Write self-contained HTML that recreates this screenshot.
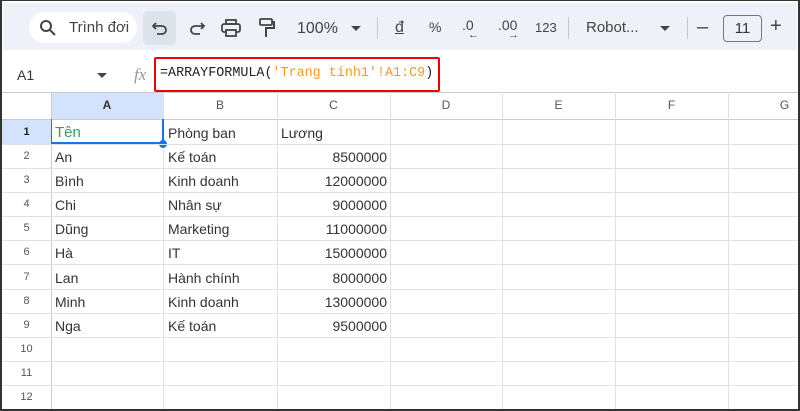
<!DOCTYPE html>
<html><head><meta charset="utf-8"><style>
*{box-sizing:border-box;margin:0;padding:0}
body{width:800px;height:411px;overflow:hidden;background:#fff;font-family:"Liberation Sans",Arial,sans-serif;position:relative}
.frame{position:absolute;left:0;top:0;width:800px;height:411px;border:2px solid #333;border-top-width:1px;z-index:10;pointer-events:none}
.tb{position:absolute;left:3px;top:3px;width:794px;height:47px;background:#eef2f8}
.t{position:absolute;color:#444;font-size:16px}
.hl{position:absolute;height:1px;background:#e1e1e1}
.vl{position:absolute;width:1px;background:#e1e1e1}
.c{position:absolute;font-size:14px;color:#333}
.rh{position:absolute;left:2px;width:49px;text-align:center;font-size:11px;color:#555}
.ch{position:absolute;top:98px;font-size:12px;color:#555;text-align:center}
</style></head><body>
<div class="tb"></div>
<div style="position:absolute;left:29px;top:12px;width:108px;height:31px;background:#fff;border-radius:16px"></div>
<svg style="position:absolute;left:39px;top:19px" width="18" height="18" viewBox="0 0 18 18"><circle cx="7" cy="7" r="5" fill="none" stroke="#444" stroke-width="2"/><path d="M11 11l5 5" stroke="#444" stroke-width="2"/></svg>
<div class="t" style="left:69px;top:19px;font-size:15px">Trình đơi</div>
<div style="position:absolute;left:143px;top:11px;width:33px;height:34px;background:#dde3ea;border-radius:4px"></div>
<svg style="position:absolute;left:151px;top:20px" width="18" height="16" viewBox="0 0 18 16"><path d="M5 3L2 6l3 3M2 6h9a4 4 0 010 8H6" fill="none" stroke="#444" stroke-width="1.8"/></svg>
<svg style="position:absolute;left:188px;top:20px" width="18" height="16" viewBox="0 0 18 16"><path d="M13 3l3 3-3 3M16 6H7a4 4 0 000 8h5" fill="none" stroke="#444" stroke-width="1.8"/></svg>
<svg style="position:absolute;left:221px;top:19px" width="20" height="18" viewBox="0 0 20 18"><rect x="5" y="1" width="10" height="4" fill="none" stroke="#444" stroke-width="1.8"/><rect x="1" y="5" width="18" height="8" rx="2" fill="none" stroke="#444" stroke-width="1.8"/><rect x="5" y="11" width="10" height="6" fill="#eef2f8" stroke="#444" stroke-width="1.8"/></svg>
<svg style="position:absolute;left:258px;top:18px" width="18" height="20" viewBox="0 0 18 20"><rect x="2" y="1" width="12" height="6" rx="1" fill="none" stroke="#444" stroke-width="1.8"/><path d="M14 4h2v6H8v3M8 13v6" fill="none" stroke="#444" stroke-width="2"/></svg>
<div class="t" style="left:297px;top:20px">100%</div>
<div style="position:absolute;left:351px;top:26px;border:5px solid transparent;border-top:5px solid #444"></div>
<div style="position:absolute;left:377px;top:17px;width:1px;height:22px;background:#c4c7c5"></div>
<div class="t" style="left:395px;top:19px;text-decoration:underline">đ</div>
<div class="t" style="left:429px;top:19px;font-size:14px">%</div>
<div class="t" style="left:462px;top:17px;font-size:14px">.0</div>
<div class="t" style="left:468px;top:29px;font-size:11px">←</div>
<div class="t" style="left:498px;top:17px;font-size:14px">.00</div>
<div class="t" style="left:508px;top:29px;font-size:11px">→</div>
<div class="t" style="left:535px;top:20px;font-size:13px">123</div>
<div style="position:absolute;left:568px;top:17px;width:1px;height:22px;background:#c4c7c5"></div>
<div class="t" style="left:586px;top:19px;font-size:15px">Robot...</div>
<div style="position:absolute;left:660px;top:26px;border:5px solid transparent;border-top:5px solid #444"></div>
<div style="position:absolute;left:687px;top:17px;width:1px;height:22px;background:#c4c7c5"></div>
<div class="t" style="left:697px;top:16px;font-size:20px">–</div>
<div style="position:absolute;left:723px;top:15px;width:39px;height:27px;border:1px solid #777;border-radius:4px;text-align:center;font-size:15px;color:#333;line-height:25px">11</div>
<div class="t" style="left:770px;top:15px;font-size:20px">+</div>
<div class="c" style="left:17px;top:67px;font-size:14px">A1</div>
<div style="position:absolute;left:97px;top:73px;border:5px solid transparent;border-top:5px solid #444"></div>
<div class="c" style="left:134px;top:65px;font-family:'Liberation Serif',serif;font-style:italic;color:#999;font-size:17px">fx</div>
<div style="position:absolute;left:154px;top:57px;width:286px;height:35px;border:2px solid #e00;border-radius:2px"></div>
<div class="c" style="left:160px;top:66px;font-family:'Liberation Mono',monospace;font-size:13.4px;color:#222">=ARRAYFORMULA(<span style="color:#f09a2c">'Trang tính1'!A1:C9</span>)</div>
<div class="hl" style="left:2px;top:92px;width:796px;background:#ccc"></div>
<div style="position:absolute;left:51px;top:93px;width:112px;height:26px;background:#d3e3fd"></div>
<div style="position:absolute;left:2px;top:120px;width:49px;height:24px;background:#d3e3fd"></div>
<div class="hl" style="left:2px;top:119px;width:796px;background:#ccc"></div>
<div class="vl" style="left:51px;top:92px;height:318px;background:#ccc"></div>
<div class="vl" style="left:163px;top:92px;height:318px"></div>
<div class="vl" style="left:277px;top:92px;height:318px"></div>
<div class="vl" style="left:390px;top:92px;height:318px"></div>
<div class="vl" style="left:502px;top:92px;height:318px"></div>
<div class="vl" style="left:615px;top:92px;height:318px"></div>
<div class="vl" style="left:728px;top:92px;height:318px"></div>
<div class="ch" style="left:51px;width:112px;font-weight:bold;color:#333">A</div>
<div class="ch" style="left:163px;width:114px">B</div>
<div class="ch" style="left:277px;width:113px">C</div>
<div class="ch" style="left:390px;width:112px">D</div>
<div class="ch" style="left:502px;width:113px">E</div>
<div class="ch" style="left:615px;width:113px">F</div>
<div class="ch" style="left:728px;width:113px">G</div>
<div style="position:absolute;left:51px;top:119px;width:113px;height:25px;border:2px solid #1a73e8;border-top:none;border-left-width:1px"></div>
<div style="position:absolute;left:159px;top:140px;width:8px;height:8px;border-radius:50%;background:#1a73e8"></div>
<div class="hl" style="left:2px;top:144px;width:796px"></div>
<div class="hl" style="left:2px;top:168px;width:796px"></div>
<div class="hl" style="left:2px;top:192px;width:796px"></div>
<div class="hl" style="left:2px;top:216px;width:796px"></div>
<div class="hl" style="left:2px;top:240px;width:796px"></div>
<div class="hl" style="left:2px;top:264px;width:796px"></div>
<div class="hl" style="left:2px;top:289px;width:796px"></div>
<div class="hl" style="left:2px;top:313px;width:796px"></div>
<div class="hl" style="left:2px;top:337px;width:796px"></div>
<div class="hl" style="left:2px;top:361px;width:796px"></div>
<div class="hl" style="left:2px;top:385px;width:796px"></div>
<div class="rh" style="top:126px;font-weight:bold;color:#222">1</div>
<div class="rh" style="top:150px">2</div><div class="rh" style="top:174px">3</div><div class="rh" style="top:198px">4</div><div class="rh" style="top:222px">5</div><div class="rh" style="top:246px">6</div><div class="rh" style="top:271px">7</div><div class="rh" style="top:295px">8</div><div class="rh" style="top:319px">9</div><div class="rh" style="top:343px">10</div><div class="rh" style="top:367px">11</div><div class="rh" style="top:391px">12</div>
<div class="c" style="left:55px;top:124px;color:#3c9a5f;font-size:15px">Tên</div>
<div class="c" style="left:168px;top:125px">Phòng ban</div>
<div class="c" style="left:281px;top:125px">Lương</div>
<div class="c" style="left:55px;top:149px">An</div><div class="c" style="left:168px;top:149px">Kế toán</div><div class="c" style="left:277px;width:110px;text-align:right;top:149px">8500000</div>
<div class="c" style="left:55px;top:173px">Bình</div><div class="c" style="left:168px;top:173px">Kinh doanh</div><div class="c" style="left:277px;width:110px;text-align:right;top:173px">12000000</div>
<div class="c" style="left:55px;top:197px">Chi</div><div class="c" style="left:168px;top:197px">Nhân sự</div><div class="c" style="left:277px;width:110px;text-align:right;top:197px">9000000</div>
<div class="c" style="left:55px;top:221px">Dũng</div><div class="c" style="left:168px;top:221px">Marketing</div><div class="c" style="left:277px;width:110px;text-align:right;top:221px">11000000</div>
<div class="c" style="left:55px;top:245px">Hà</div><div class="c" style="left:168px;top:245px">IT</div><div class="c" style="left:277px;width:110px;text-align:right;top:245px">15000000</div>
<div class="c" style="left:55px;top:270px">Lan</div><div class="c" style="left:168px;top:270px">Hành chính</div><div class="c" style="left:277px;width:110px;text-align:right;top:270px">8000000</div>
<div class="c" style="left:55px;top:294px">Minh</div><div class="c" style="left:168px;top:294px">Kinh doanh</div><div class="c" style="left:277px;width:110px;text-align:right;top:294px">13000000</div>
<div class="c" style="left:55px;top:318px">Nga</div><div class="c" style="left:168px;top:318px">Kế toán</div><div class="c" style="left:277px;width:110px;text-align:right;top:318px">9500000</div>
<div class="frame"></div>
</body></html>
